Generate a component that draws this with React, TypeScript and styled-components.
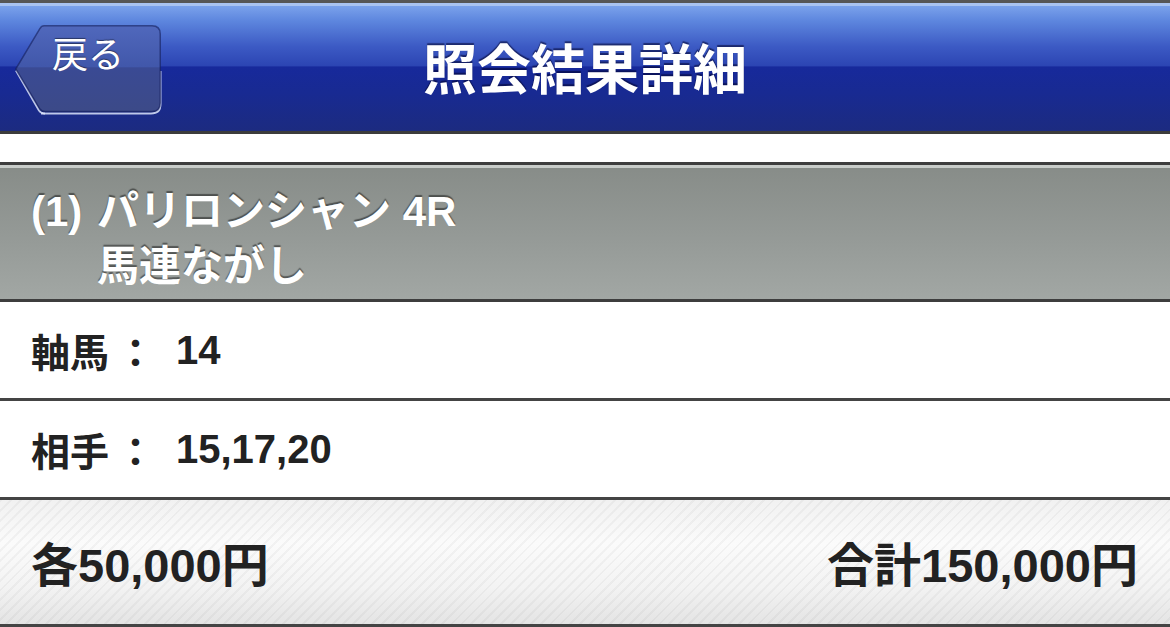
import React from 'react';
import styled, { createGlobalStyle } from 'styled-components';

const GlobalStyle = createGlobalStyle`
  html, body {
    margin: 0;
    padding: 0;
    background: #ffffff;
  }
  body {
    width: 1170px;
    height: 627px;
    overflow: hidden;
    font-family: "Liberation Sans", "Noto Sans CJK JP", sans-serif;
  }
  * {
    box-sizing: border-box;
  }
`;

const Page = styled.div`
  display: flex;
  flex-direction: column;
  width: 1170px;
  height: 627px;
`;

const NavBar = styled.header`
  display: grid;
  grid-template-columns: 1fr auto 1fr;
  align-items: center;
  height: 134px;
  border-top: 3px solid #565656;
  border-bottom: 3px solid #3c3c3c;
  box-shadow: inset 0 3px 0 #a9c3f1;
  background: linear-gradient(
    to bottom,
    #80a7ee 0%,
    #5d86de 14%,
    #3c5ac4 34%,
    #2c45b3 49%,
    #17299b 50%,
    #182a92 70%,
    #1c2b80 100%
  );
`;

const BackButton = styled.button`
  position: relative;
  align-self: start;
  justify-self: start;
  display: flex;
  align-items: flex-start;
  width: 146px;
  height: 88px;
  margin: 22px 0 0 15px;
  padding: 5px 0 0 37px;
  border: none;
  background: transparent;
  cursor: pointer;
`;

const ButtonShape = styled.svg`
  position: absolute;
  inset: 0;
  width: 146px;
  height: 88px;
  overflow: visible;
`;

const ButtonLabel = styled.span`
  position: relative;
  font-family: "Noto Sans CJK JP", sans-serif;
  font-size: 36px;
  line-height: 44px;
  font-weight: 400;
  color: #ffffff;
  text-shadow: 0 -1px 1px rgba(0, 0, 0, 0.45);
`;

const Title = styled.h1`
  margin: 0;
  font-family: "Noto Sans CJK JP", sans-serif;
  font-size: 54px;
  line-height: 64px;
  font-weight: 700;
  color: #ffffff;
  text-shadow: 0 -2px 1px rgba(0, 0, 40, 0.55);
`;

const Spacer = styled.div`
  height: 28px;
  background: #ffffff;
`;

const RaceHeader = styled.section`
  display: flex;
  align-items: flex-start;
  gap: 16px;
  height: 140px;
  padding: 19px 0 0 31px;
  border-top: 3px solid #3e3e3e;
  border-bottom: 3px solid #3e3e3e;
  box-shadow: inset 0 3px 0 #c9cdca;
  background: linear-gradient(to bottom, #878c88 0%, #959a97 55%, #a2a7a4 100%);
  color: #ffffff;
  font-size: 42px;
  font-weight: 700;
  line-height: 55px;
  text-shadow: 0 -2px 1px rgba(0, 0, 0, 0.45);
`;

const RaceNumber = styled.span`
  flex: none;
  width: 50px;
`;

const RaceLines = styled.div`
  display: flex;
  flex-direction: column;
`;

const InfoRow = styled.div`
  display: flex;
  align-items: center;
  height: 99px;
  padding-left: 31px;
  border-bottom: 3px solid #444444;
  background: #ffffff;
  color: #222222;
  font-size: 39px;
  font-weight: 700;
`;

const InfoLabel = styled.span`
  display: flex;
  width: 145px;
  flex: none;
`;

const Colon = styled.span`
  margin-left: 7px;
`;

const InfoValue = styled.span`
  font-size: 40px;
`;

const Totals = styled.footer`
  display: flex;
  align-items: center;
  justify-content: space-between;
  height: 127px;
  padding: 0 32px 2px 31px;
  border-bottom: 3px solid #444444;
  background:
    repeating-linear-gradient(135deg, rgba(0, 0, 0, 0.035) 0 2px, transparent 2px 7px),
    linear-gradient(to bottom, #f1f1f1 0%, #fbfbfb 35%, #f3f3f3 70%, #e4e4e4 100%);
  color: #222222;
  font-size: 47px;
  font-weight: 700;
`;

const BackShape = () => (
  <ButtonShape viewBox="0 0 146 88" aria-hidden="true">
    <defs>
      <linearGradient id="backFill" x1="0" y1="0" x2="0" y2="1">
        <stop offset="0" stopColor="#5068bc" />
        <stop offset="0.48" stopColor="#4157aa" />
        <stop offset="0.49" stopColor="#3a4a94" />
        <stop offset="1" stopColor="#3c4a88" />
      </linearGradient>
    </defs>
    <path
      d="M26 88.5 L136 88.5 Q145.5 88.5 145.5 79 L145.5 46"
      fill="none"
      stroke="rgba(220,228,250,0.85)"
      strokeWidth="2"
    />
    <path
      d="M1 45.5 L24 85.5 Q26 88.5 30 88.5"
      fill="none"
      stroke="rgba(220,228,250,0.85)"
      strokeWidth="2"
    />
    <path
      d="M29 0.75 L137 0.75 Q145.25 0.75 145.25 9 L145.25 78 Q145.25 86.5 137 86.5 L30 86.5 Q26.5 86.5 24.5 83.5 L0.75 44 L25 3.5 Q26.5 0.75 29 0.75 Z"
      fill="url(#backFill)"
      stroke="rgba(20,30,90,0.6)"
      strokeWidth="1.5"
    />
  </ButtonShape>
);

export default function App() {
  return (
    <>
      <GlobalStyle />
      <Page>
        <NavBar>
          <BackButton type="button">
            <BackShape />
            <ButtonLabel>戻る</ButtonLabel>
          </BackButton>
          <Title>照会結果詳細</Title>
          <div />
        </NavBar>
        <Spacer />
        <RaceHeader>
          <RaceNumber>(1)</RaceNumber>
          <RaceLines>
            <span>パリロンシャン 4R</span>
            <span>馬連ながし</span>
          </RaceLines>
        </RaceHeader>
        <InfoRow>
          <InfoLabel>
            軸馬<Colon>：</Colon>
          </InfoLabel>
          <InfoValue>14</InfoValue>
        </InfoRow>
        <InfoRow>
          <InfoLabel>
            相手<Colon>：</Colon>
          </InfoLabel>
          <InfoValue>15,17,20</InfoValue>
        </InfoRow>
        <Totals>
          <span>各50,000円</span>
          <span>合計150,000円</span>
        </Totals>
      </Page>
    </>
  );
}
